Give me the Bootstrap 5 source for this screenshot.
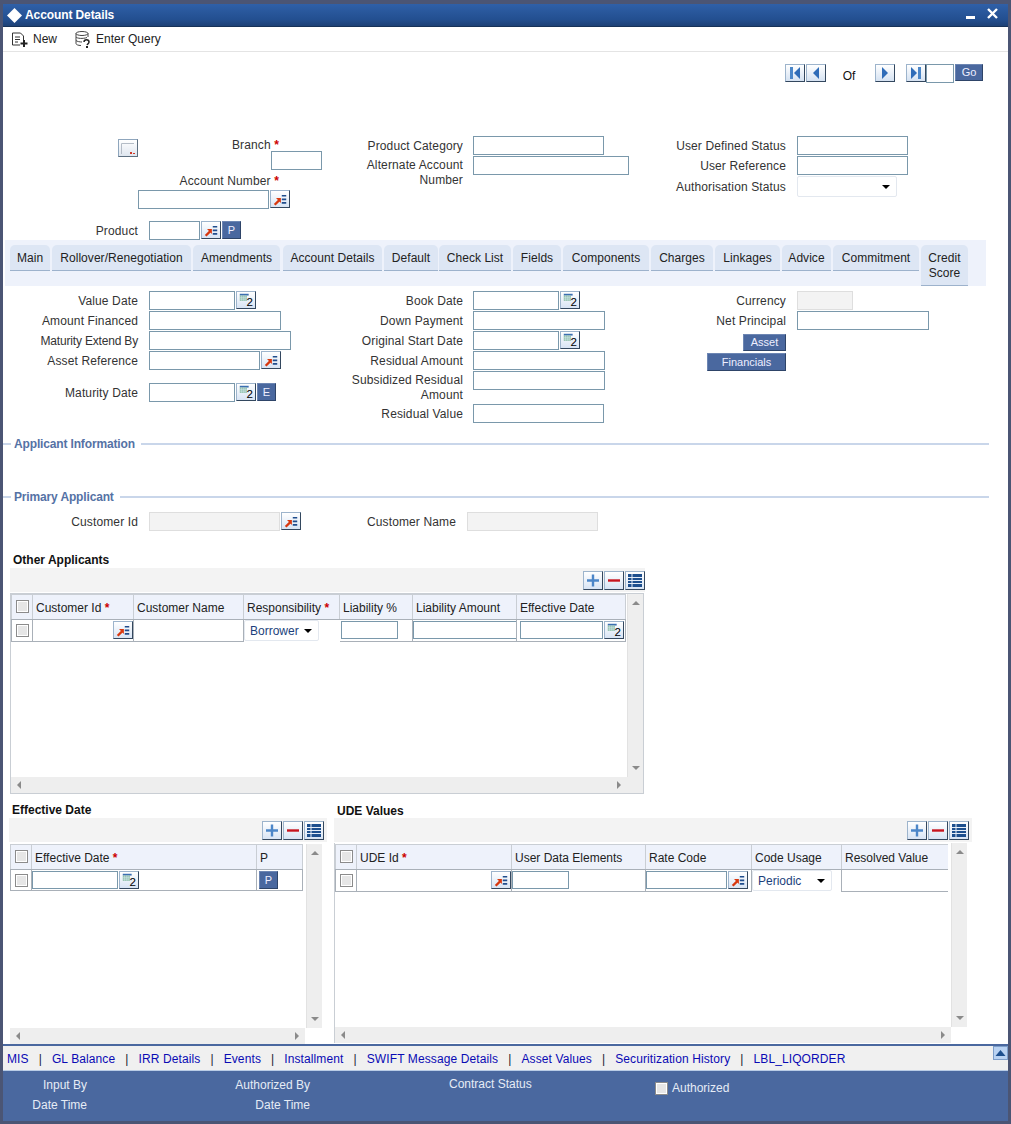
<!DOCTYPE html>
<html lang="en"><head><meta charset="utf-8"><title>Account Details</title>
<link href="https://cdn.jsdelivr.net/npm/bootstrap@5.3.0/dist/css/bootstrap.min.css" rel="stylesheet">
<style>
html,body{margin:0;height:1124px;overflow:hidden}
body{background:#4b5574;font:12px/14px "Liberation Sans",Arial,sans-serif;color:#333}
.win{height:1124px;width:1011px;padding:4px 3px 3px;display:flex;flex-direction:column}
.ttl{height:23px;flex:none;background:linear-gradient(#2f60a8,#234f90 70%,#1d4176);border-bottom:1px solid #173258;color:#fff;font-weight:700;padding-left:3px;letter-spacing:-.1px}
.dia{margin-right:2px}
.tool{height:25px;flex:none;background:#fff;border-bottom:1px solid #e4e4e4;color:#222}
.tool span{margin-right:17px}
.body-w{flex:1;background:#fff;min-height:0;display:flex;flex-direction:column}
.pager{height:84px;flex:none;padding:12px 25px 0 0}
.pg{width:20px;height:18px;border:1px solid;border-color:#9db4cc #33475e #33475e #9db4cc;background:linear-gradient(#fff,#d5e2f2);padding:0;display:block;line-height:0}
.pg2{margin-left:1px}.pg4{margin-left:11px}
.form-control.pgin{width:28px;height:18px;border-color:#a3bccf;border-width:1px}
.ofl{width:49px;text-align:center;color:#111;padding-right:3px}
.btn.bt{background:#4a689f;color:#eef;border:1px solid;border-color:#6d86b3 #2e4468 #2e4468 #6d86b3;border-radius:0;font-size:11px;line-height:13px;padding:0;--bs-btn-hover-bg:#4a689f}
.go{width:28px;height:17px;margin-left:1px}.pbt{width:19px;height:18px;margin-left:1px}.ast{width:43px;height:17px}.fin{width:79px;height:18px}
.form-control.fld{height:19px;min-height:0;padding:0 3px;border:1px solid #7a98ab;border-radius:0;font-size:12px;background:#fff;display:block}
.form-control.fld.ro{background:#f3f3f3;border-color:#dedede}
.sq{width:20px;height:18px;flex:none;border:1px solid;border-color:#9db4cc #33475e #33475e #9db4cc;background:linear-gradient(#fff,#d8e4f4);padding:0;display:block;line-height:0;margin-left:1px}
.sq svg{display:block}
.i51{width:51px}.i56{width:56px}.i86{width:86px}.i111{width:111px}.i132{width:132px}.i142{width:142px}.i156{width:156px}.i131{width:131px}.i83{width:83px}.i57{width:57px}.i105{width:104px}.i81{width:81px}
.hdr{height:104px;flex:none}
.c1{width:337px;flex:none}.c2{width:300px;flex:none}
.rw{min-height:20px}
.rw>input,.rw>button{align-self:flex-start}
.lb{text-align:right;flex:none;margin:0;color:#333;letter-spacing:.13px}
.lb.tight{letter-spacing:-.18px}
.l136{width:135px;margin-right:11px}.l123{width:123px;margin-right:10px}.l146{width:146px;margin-right:11px}
.req{color:#c00;font-weight:700}
.brl{width:276px;text-align:right;height:15px;letter-spacing:.13px}
.brtop{padding-top:2px;justify-content:space-between}
.brlow{height:16px;line-height:15px}
.brin{margin-left:268px}
.acin{margin-left:135px}
.prodrow{margin-top:12px}
.rsz{width:20px;height:18px;margin:1px 0 0 115px;border:1px solid;border-color:#8fa6bd #5d6f80 #5d6f80 #8fa6bd;background:linear-gradient(#fff,#dfe6ef);display:block;line-height:0;padding:0;flex:none}
.tabs{height:46px;flex:none;margin:0 22px 0 2px;background:#eef2fb;padding:5px 0 0 5px;gap:2px;flex-wrap:nowrap}
.tabs .nav-link{background:#dde6f4;color:#222;border-radius:5px 5px 0 0;border-bottom:1px solid #9db2cc;padding:6px 0 0;height:26px;font-size:12px;line-height:15px;white-space:nowrap;text-align:center;letter-spacing:.05px}
.tabs .tb2{height:41px;white-space:normal;text-align:center}
.t40{width:40px}.t139{width:139px}.t87{width:87px}.t99{width:99px;margin-left:1px}.t54{width:54px}.t72{width:72px;margin-left:-1px}.t48{width:48px}.t86{width:86px}.t62{width:62px}.t65{width:65px}.t49{width:49px}.t47{width:47px}
.f2{height:144px;flex:none;padding-top:5px}
.gapr{margin-top:12px}
.alt{line-height:15px;padding-top:2px}
.sbl{line-height:15px;padding-top:2px}.subs{height:33px}
.legd{height:28px;flex:none;color:#5572a5;font-weight:700;gap:3px;letter-spacing:-.15px}
.legd::before{content:"";width:8px;border-top:2px solid #c9d6ea}
.legd::after{content:"";flex:1;border-top:2px solid #c9d6ea;margin:0 19px 0 3px}
.sp25{height:25px;flex:none}
.cust{height:20px;flex:none;margin-top:1px}
.cnl{width:120px;margin:0 11px 0 -4px}
.bb{width:146px;margin-top:3px}.bb+.bb{margin-top:2px}
.gttl{font-weight:700;color:#111;height:16px;line-height:17px}
.ga{margin:20px 0 0 7px;width:635px;flex:none}
.ga .gttl{padding-left:3px}
.strip{height:24px;background:#f3f3f3;padding:3px 0 0;gap:1px}
.strip .sq{height:19px;margin-left:0}
.grd{border:1px solid #c9ced4;background:#fff;height:201px;width:634px;margin-top:1px;display:flex;flex-direction:column}
.gtop{flex:1;display:flex;min-height:0}
.gtbl{flex:1;overflow:hidden;min-width:0;padding:0}
.vb{width:16px;flex:none;background:#eee;display:flex;flex-direction:column;justify-content:space-between;align-items:center;padding:7px 0;border-left:1px solid #e2e2e2}
.hb{height:16px;flex:none;background:#eee;display:flex;justify-content:space-between;align-items:center;padding:0 6px}
.up,.dn,.lf,.rt{width:0;height:0;border:4px solid transparent}
.up{border-bottom-color:#8a8a8a;border-top:0}.dn{border-top-color:#8a8a8a;border-bottom:0}
.lf{border-right-color:#8a8a8a;border-left:0}.rt{border-left-color:#8a8a8a;border-right:0}
.tb{border-collapse:collapse;table-layout:fixed;margin:0;color:#222}
.tb th{background:#eef2fb;font-weight:400;height:25px;padding:2px 3px 0;border:1px solid #c9ced4;border-bottom-color:#a9b0b8;white-space:nowrap;color:#222}
.tb td{height:21px;padding:0;border:1px solid #a9b0b8;border-top:0;background:#fff}
.tb .form-control.fld{height:18px}
.tb .sq{height:18px;width:20px}
.tb td.bn{border-width:0 0 0 1px}
.tb td.bnl{border-left:0;padding-left:1px}
.tb td.eff{padding-left:3px}
.tw1{width:614px}.tw2{width:292px}.tw3{width:627px}
.w21{width:21px}.w101{width:101px}.w110{width:110px}.w96{width:96px}.w73{width:73px}.w104{width:104px}.w109{width:109px}.w225{width:225px}.w46{width:46px}.w155{width:155px}.w134{width:134px}.w106{width:106px}.w90{width:90px}.w121{width:121px}
.cc{text-align:center}
.form-check-input.ck{width:13px;height:13px;margin:0;border:1px solid #8b8b8b;border-radius:0;background:#e6e6e6;box-shadow:inset 0 0 0 1px #fff;float:none;display:inline-block;vertical-align:middle}
thead .form-check-input.ck{margin-top:-5px}
.form-select.sel{height:21px;padding:0 0 0 5px;border:1px solid #e3e8ef;border-radius:2px;font-size:12px;color:#1c3f7c;background-color:#fff;background-image:url("data:image/svg+xml,%3Csvg xmlns='http://www.w3.org/2000/svg' width='8' height='4'%3E%3Cpath d='M0 0h8L4 4z'/%3E%3C/svg%3E");background-position:right 6px center;background-size:8px 4px}
.s75{width:75px}.s100{width:100px;border-color:#bfcbd8}
.s80{width:80px}
.btm{height:242px;flex:none;margin-top:8px;gap:7px;padding-left:6px}
.pl{width:318px;flex:none}.pr{width:638px;flex:none;padding-top:1px}
.pl .gttl{padding-left:3px;line-height:16px}.pr .gttl{padding-left:3px;height:15px;line-height:16px}
.stp1{width:318px;padding-right:3px}
.pr .strip{padding-right:3px}
.bgrid{height:200px;margin:2px 0 0 1px;display:flex;flex-direction:column}
.bl{width:312px}.br{width:633px;margin-left:0;border-left:1px solid #c9ced4;height:200px;margin-top:1px}
.br .gtbl{padding-top:1px;margin-right:3px}
.br .hb{margin-right:16px}
.bl .hb{margin-right:17px}
.pcell{padding-left:1px!important}
.gapw{flex:1;background:#fff}
.lnks{height:27px;flex:none;background:#f0f0f0;border-top:2px solid #4a689f;border-bottom:1px solid #b9cce6;padding-left:4px;color:#0a0ab4;position:relative;line-height:26px;white-space:nowrap;letter-spacing:.11px}
.lnks a{color:#0a0ab4;text-decoration:none}
.lnks i{font-style:normal;margin:0 10px;color:#223}
.colb{position:absolute;right:0;top:0;width:15px;height:14px;background:#b9d2f2;border:1px solid #7d9ec9;line-height:0;padding:0}
.foot{height:50px;flex:none;background:#4a689f;color:#e6ecf6;display:grid;grid-template-columns:84px 223px 345px 1fr;padding-top:4px;line-height:20px}
.foot>div{text-align:right}
.foot .st{text-align:left;padding-left:139px;margin-top:-1px}
.foot .au{text-align:left;padding-top:0;line-height:19px}
.auinner{margin-top:4px}
</style></head><body>
<svg width="0" height="0" class="d-none" aria-hidden="true"><defs>
<symbol id="lk" viewBox="0 0 18 18"><path d="M3 15.500 8 10.500" stroke="#d8380f" stroke-width="2.600"/><path d="M4.500 8h5.500v5.500z" fill="#d8380f"/><path d="M11 4.500h5v1.800h-5zM11 8.500h5v1.800h-5zM11 12.500h5v1.800h-5z" fill="#1f4c8c"/></symbol>
<symbol id="cal" viewBox="0 0 18 18"><path d="M2 2h10v2H2z" fill="#3b6fb0"/><path d="M2 4h8v6H2z" fill="#8fc0a8"/><path d="M4 4v6M6 4v6M8 4v6M2 6h8M2 8h8" stroke="#d4e6ef" stroke-width=".6"/><text x="9.500" y="16" font-size="13" font-family="Liberation Sans" fill="#000">2</text></symbol>
<symbol id="plus" viewBox="0 0 18 17"><path d="M9 2.500v12M3 8.500h12" stroke="#4c86c8" stroke-width="2.400"/></symbol>
<symbol id="minus" viewBox="0 0 18 17"><path d="M3 8.500h12" stroke="#c8141e" stroke-width="2.400"/></symbol>
<symbol id="cols" viewBox="0 0 18 17"><path d="M2 2h14v13H2z" fill="#1d4f8e"/><path d="M2 5.500h14M2 8.500h14M2 11.500h14M6 2v13" stroke="#e6eef8"/></symbol>
</defs></svg>
<div class="win">
<div class="ttl d-flex align-items-center">
<svg width="17" height="17" viewBox="0 0 17 17" class="dia"><path d="M8.500 1 16 8.500 8.500 16 1 8.500z" fill="#fff"/></svg>
<span class="flex-grow-1">Account Details</span>
<svg width="40" height="16" viewBox="0 0 40 16" class="me-2"><path d="M6 9h9v3H6z" fill="#fff"/><path d="M28 2l9 9M37 2l-9 9" stroke="#fff" stroke-width="2.400"/></svg>
</div>
<div class="tool d-flex align-items-center">
<svg width="18" height="17" viewBox="0 0 18 17" class="ms-2 me-1"><path d="M1.500 14V2h8l3 3v4M1.500 14H9M4 6h5M4 8.500h5M4 11h3" fill="none" stroke="#333"/><path d="M13 9v7M9.500 12.500h7" stroke="#222" stroke-width="2"/></svg><span>New</span>
<svg width="18" height="18" viewBox="0 0 18 18" class="me-1"><ellipse cx="8" cy="3.500" rx="6" ry="2" fill="none" stroke="#444"/><path d="M2 3.500v10c0 1 2 2 5 2M14 3.500V7M2 7c1 1.500 7 2 11 .5M2 10.500c1 1 4 1.500 6 1.500" fill="none" stroke="#444"/><path d="M10 12c0-3 5-3 5 0 0 1.500-1.500 2-2 3" fill="none" stroke="#222" stroke-width="1.500"/><path d="M12 16h2v2h-2z" fill="#222"/></svg><span>Enter Query</span>
</div>
<div class="body-w">
<div class="pager d-flex justify-content-end align-items-start">
<button class="pg" aria-label="First"><svg width="18" height="16" viewBox="0 0 18 16"><path d="M4 2h3v12H4z" fill="#4b86c8"/><path d="M14 2v12L8 8z" fill="#2f6cb8"/></svg></button>
<button class="pg pg2" aria-label="Previous"><svg width="18" height="16" viewBox="0 0 18 16"><path d="M12 2v12L6 8z" fill="#2f6cb8"/></svg></button>
<span class="ofl lh-lg">Of</span>
<button class="pg" aria-label="Next"><svg width="18" height="16" viewBox="0 0 18 16"><path d="M6 2v12l6-6z" fill="#2f6cb8"/></svg></button>
<button class="pg pg4" aria-label="Last"><svg width="18" height="16" viewBox="0 0 18 16"><path d="M4 2v12l6-6z" fill="#2f6cb8"/><path d="M11 2h3v12h-3z" fill="#4b86c8"/></svg></button>
<input class="form-control fld pgin" aria-label="Page">
<button class="btn bt go">Go</button>
</div>
<div class="hdr d-flex">
<div class="c1">
<div class="brl brtop d-flex"><button class="rsz" aria-label="Resize"><svg width="18" height="16" viewBox="0 0 18 16"><path d="M2.500 14V3.500H15" fill="none" stroke="#b4bcc6"/><path d="M11 12h2v2h-2zM14 13h2v1h-2z" fill="#cf3a2a"/></svg></button><span>Branch <span class="req">*</span></span></div>
<input class="form-control fld i51 brin" aria-label="Branch">
<div class="brl brlow mt-1">Account Number <span class="req">*</span></div>
<div class="d-flex acin align-items-start"><input class="form-control fld i131" aria-label="Account Number"><button class="sq" aria-label="Lookup"><svg width="18" height="16"><use href="#lk"/></svg></button></div>
<div class="d-flex align-items-center rw prodrow"><label class="lb l136">Product</label><input class="form-control fld i51"><button class="sq" aria-label="Lookup"><svg width="18" height="16"><use href="#lk"/></svg></button><button class="btn bt pbt">P</button></div>
</div>
<div class="c2">
<div class="d-flex align-items-center rw"><label class="lb l123">Product Category</label><input class="form-control fld i131"></div>
<div class="d-flex align-items-start rw"><label class="lb l123 alt">Alternate Account Number</label><input class="form-control fld i156"></div>
</div>
<div>
<div class="d-flex align-items-center rw"><label class="lb l146">User Defined Status</label><input class="form-control fld i111"></div>
<div class="d-flex align-items-center rw"><label class="lb l146">User Reference</label><input class="form-control fld i111"></div>
<div class="d-flex align-items-center rw"><label class="lb l146">Authorisation Status</label><select class="form-select sel s100" aria-label="Authorisation Status"><option></option></select></div>
</div>
</div>
<ul class="nav tabs">
<li><a class="nav-link t40" href="#">Main</a></li><li><a class="nav-link t139" href="#">Rollover/Renegotiation</a></li><li><a class="nav-link t87" href="#">Amendments</a></li><li><a class="nav-link t99" href="#">Account Details</a></li><li><a class="nav-link t54" href="#">Default</a></li><li><a class="nav-link t72" href="#">Check List</a></li><li><a class="nav-link t48" href="#">Fields</a></li><li><a class="nav-link t86" href="#">Components</a></li><li><a class="nav-link t62" href="#">Charges</a></li><li><a class="nav-link t65" href="#">Linkages</a></li><li><a class="nav-link t49" href="#">Advice</a></li><li><a class="nav-link t86" href="#">Commitment</a></li><li><a class="nav-link tb2 t47" href="#">Credit Score</a></li>
</ul>
<div class="f2 d-flex">
<div class="c1">
<div class="d-flex align-items-center rw"><label class="lb l136">Value Date</label><input class="form-control fld i86"><button class="sq" aria-label="Calendar"><svg width="18" height="16"><use href="#cal"/></svg></button></div>
<div class="d-flex align-items-center rw"><label class="lb l136">Amount Financed</label><input class="form-control fld i132"></div>
<div class="d-flex align-items-center rw"><label class="lb l136 tight">Maturity Extend By</label><input class="form-control fld i142"></div>
<div class="d-flex align-items-center rw"><label class="lb l136">Asset Reference</label><input class="form-control fld i111"><button class="sq" aria-label="Lookup"><svg width="18" height="16"><use href="#lk"/></svg></button></div>
<div class="d-flex align-items-center rw gapr"><label class="lb l136">Maturity Date</label><input class="form-control fld i86"><button class="sq" aria-label="Calendar"><svg width="18" height="16"><use href="#cal"/></svg></button><button class="btn bt pbt">E</button></div>
</div>
<div class="c2">
<div class="d-flex align-items-center rw"><label class="lb l123">Book Date</label><input class="form-control fld i86"><button class="sq" aria-label="Calendar"><svg width="18" height="16"><use href="#cal"/></svg></button></div>
<div class="d-flex align-items-center rw"><label class="lb l123">Down Payment</label><input class="form-control fld i132"></div>
<div class="d-flex align-items-center rw"><label class="lb l123">Original Start Date</label><input class="form-control fld i86"><button class="sq" aria-label="Calendar"><svg width="18" height="16"><use href="#cal"/></svg></button></div>
<div class="d-flex align-items-center rw"><label class="lb l123">Residual Amount</label><input class="form-control fld i132"></div>
<div class="d-flex align-items-start rw subs"><label class="lb l123 sbl">Subsidized Residual Amount</label><input class="form-control fld i132"></div>
<div class="d-flex align-items-center rw"><label class="lb l123">Residual Value</label><input class="form-control fld i131"></div>
</div>
<div>
<div class="d-flex align-items-center rw"><label class="lb l146">Currency</label><input class="form-control fld ro i56"></div>
<div class="d-flex align-items-center rw"><label class="lb l146">Net Principal</label><input class="form-control fld i132"></div>
<div class="bb d-flex justify-content-end"><button class="btn bt ast">Asset</button></div>
<div class="bb d-flex justify-content-end"><button class="btn bt fin">Financials</button></div>
</div>
</div>
<div class="legd d-flex align-items-center">Applicant Information</div>
<div class="sp25"></div>
<div class="legd d-flex align-items-center">Primary Applicant</div>
<div class="cust d-flex">
<div class="c1 d-flex align-items-center rw"><label class="lb l136">Customer Id</label><input class="form-control fld ro i131"><button class="sq" aria-label="Lookup"><svg width="18" height="16"><use href="#lk"/></svg></button></div>
<div class="d-flex align-items-center rw"><label class="lb cnl">Customer Name</label><input class="form-control fld ro i131"></div>
</div>
<div class="ga">
<div class="gttl">Other Applicants</div>
<div class="strip d-flex justify-content-end">
<button class="sq" aria-label="Add"><svg width="18" height="17"><use href="#plus"/></svg></button>
<button class="sq" aria-label="Remove"><svg width="18" height="17"><use href="#minus"/></svg></button>
<button class="sq" aria-label="Columns"><svg width="18" height="17"><use href="#cols"/></svg></button>
</div>
<div class="grd">
<div class="gtop"><div class="gtbl">
<table class="tb tw1"><colgroup><col class="w21"><col class="w101"><col class="w110"><col class="w96"><col class="w73"><col class="w104"><col class="w109"></colgroup>
<thead><tr><th class="cc"><input class="form-check-input ck" type="checkbox" aria-label="All"></th><th>Customer Id <span class="req">*</span></th><th>Customer Name</th><th>Responsibility <span class="req">*</span></th><th>Liability %</th><th>Liability Amount</th><th>Effective Date</th></tr></thead>
<tbody><tr><td class="cc"><input class="form-check-input ck" type="checkbox" aria-label="Row"></td>
<td><div class="d-flex justify-content-end"><button class="sq" aria-label="Lookup"><svg width="18" height="16"><use href="#lk"/></svg></button></div></td>
<td></td>
<td class="bn"><select class="form-select sel s75" aria-label="Responsibility"><option>Borrower</option></select></td>
<td class="bnl"><input class="form-control fld i57" aria-label="Liability"></td>
<td><input class="form-control fld i105" aria-label="Amount"></td>
<td class="eff"><div class="d-flex"><input class="form-control fld i83" aria-label="Date"><button class="sq" aria-label="Calendar"><svg width="18" height="16"><use href="#cal"/></svg></button></div></td></tr></tbody></table>
</div><div class="vb"><i class="up"></i><i class="dn"></i></div></div>
<div class="hb"><i class="lf"></i><i class="rt me-3"></i></div>
</div>
</div>
<div class="btm d-flex">
<div class="pl">
<div class="gttl">Effective Date</div>
<div class="strip d-flex justify-content-end stp1">
<button class="sq" aria-label="Add"><svg width="18" height="17"><use href="#plus"/></svg></button>
<button class="sq" aria-label="Remove"><svg width="18" height="17"><use href="#minus"/></svg></button>
<button class="sq" aria-label="Columns"><svg width="18" height="17"><use href="#cols"/></svg></button>
</div>
<div class="bgrid bl">
<div class="gtop"><div class="gtbl">
<table class="tb tw2"><colgroup><col class="w21"><col class="w225"><col class="w46"></colgroup>
<thead><tr><th class="cc"><input class="form-check-input ck" type="checkbox" aria-label="All"></th><th>Effective Date <span class="req">*</span></th><th>P</th></tr></thead>
<tbody><tr><td class="cc"><input class="form-check-input ck" type="checkbox" aria-label="Row"></td><td><div class="d-flex"><input class="form-control fld i86" aria-label="Date"><button class="sq" aria-label="Calendar"><svg width="18" height="16"><use href="#cal"/></svg></button></div></td><td class="pcell"><button class="btn bt pbt d-block">P</button></td></tr></tbody></table>
</div><div class="vb"><i class="up"></i><i class="dn"></i></div></div>
<div class="hb"><i class="lf"></i><i class="rt"></i></div>
</div>
</div>
<div class="pr">
<div class="gttl">UDE Values</div>
<div class="strip d-flex justify-content-end">
<button class="sq" aria-label="Add"><svg width="18" height="17"><use href="#plus"/></svg></button>
<button class="sq" aria-label="Remove"><svg width="18" height="17"><use href="#minus"/></svg></button>
<button class="sq" aria-label="Columns"><svg width="18" height="17"><use href="#cols"/></svg></button>
</div>
<div class="bgrid br">
<div class="gtop"><div class="gtbl">
<table class="tb tw3"><colgroup><col class="w21"><col class="w155"><col class="w134"><col class="w106"><col class="w90"><col class="w121"></colgroup>
<thead><tr><th class="cc"><input class="form-check-input ck" type="checkbox" aria-label="All"></th><th>UDE Id <span class="req">*</span></th><th>User Data Elements</th><th>Rate Code</th><th>Code Usage</th><th>Resolved Value</th></tr></thead>
<tbody><tr><td class="cc"><input class="form-check-input ck" type="checkbox" aria-label="Row"></td>
<td><div class="d-flex justify-content-end"><button class="sq" aria-label="Lookup"><svg width="18" height="16"><use href="#lk"/></svg></button></div></td>
<td><input class="form-control fld i57" aria-label="Elements"></td>
<td><div class="d-flex"><input class="form-control fld i81" aria-label="Rate"><button class="sq" aria-label="Lookup"><svg width="18" height="16"><use href="#lk"/></svg></button></div></td>
<td class="bn"><select class="form-select sel s80" aria-label="Usage"><option>Periodic</option></select></td><td></td></tr></tbody></table>
</div><div class="vb"><i class="up"></i><i class="dn"></i></div></div>
<div class="hb"><i class="lf"></i><i class="rt"></i></div>
</div>
</div>
</div>
<div class="gapw"></div>
<div class="lnks"><a href="#">MIS</a><i>|</i><a href="#">GL Balance</a><i>|</i><a href="#">IRR Details</a><i>|</i><a href="#">Events</a><i>|</i><a href="#">Installment</a><i>|</i><a href="#">SWIFT Message Details</a><i>|</i><a href="#">Asset Values</a><i>|</i><a href="#">Securitization History</a><i>|</i><a href="#">LBL_LIQORDER</a>
<button class="colb" aria-label="Collapse"><svg width="13" height="12" viewBox="0 0 13 12"><path d="M1.500 9 6.500 3l5 6z" fill="#1d4f8e"/></svg></button></div>
<div class="foot">
<div>Input By<br>Date Time</div>
<div>Authorized By<br>Date Time</div>
<div class="st">Contract Status</div>
<div class="au"><div class="auinner d-flex align-items-center gap-1"><input class="form-check-input ck" type="checkbox" aria-label="Authorized"> Authorized</div></div>
</div>
</div></div>
</body></html>
